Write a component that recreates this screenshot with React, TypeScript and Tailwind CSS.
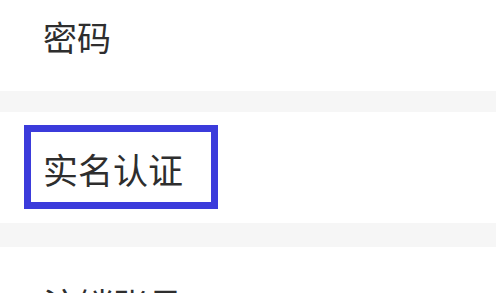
export default function App() {
  const font = { fontFamily: '"Noto Sans CJK SC", "Noto Sans", sans-serif' };
  return (
    <div className="w-[496px] h-[293px] overflow-hidden bg-white text-[#2e2e2e]" style={font}>
      <div className="h-[91px] pl-[43px] pt-[19px]">
        <span className="text-[34px] leading-[35px]">密码</span>
      </div>
      <div className="h-[21px] bg-[#f6f6f6]" />
      <div className="relative h-[111px] pl-[43px] pt-[39px]">
        <span className="text-[35px] leading-[35px]">实名认证</span>
        <div className="absolute left-[24px] top-[13px] w-[194px] h-[84px] border-[7px] border-[#3b3bdb]" />
      </div>
      <div className="h-[24px] bg-[#f6f6f6]" />
      <div className="h-[60px] pl-[43px] pt-[39px]">
        <span className="text-[35px] leading-[35px]">注销账号</span>
      </div>
    </div>
  );
}
